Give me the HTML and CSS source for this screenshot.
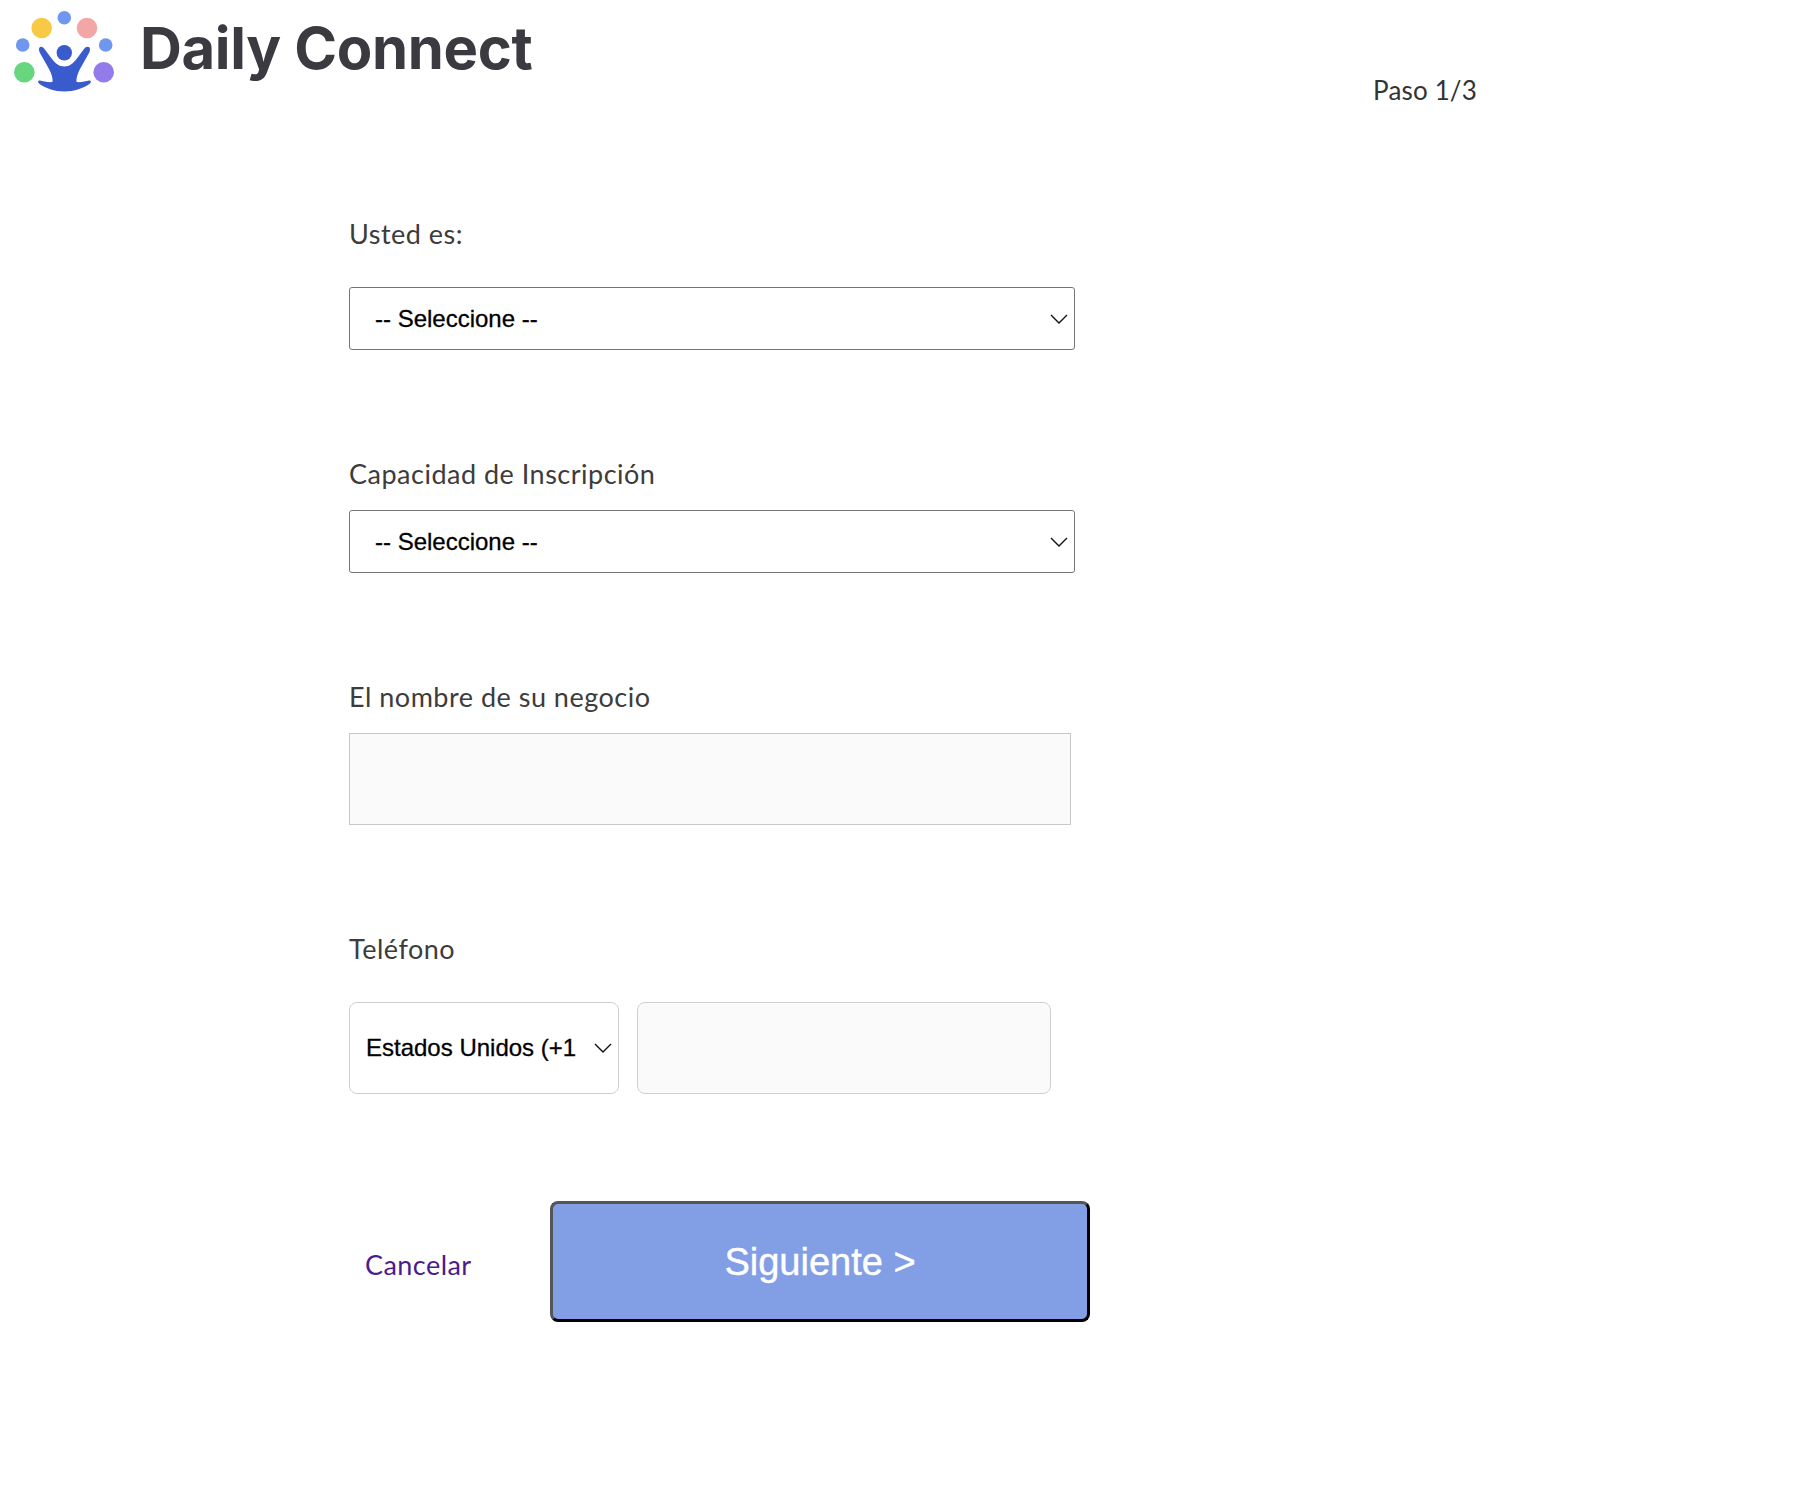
FILE: index.html
```html
<!DOCTYPE html>
<html lang="es">
<head>
<meta charset="utf-8">
<title>Daily Connect</title>
<link rel="stylesheet" href="styles.css">
</head>
<body>
<header class="header">
  <div class="brand">
    <svg class="logo" viewBox="0 0 130 100" width="130" height="100" aria-hidden="true">
      <circle cx="41.7" cy="28" r="10.3" fill="#f8c945"/>
      <circle cx="64.3" cy="17.7" r="6.8" fill="#7097f0"/>
      <circle cx="87" cy="28" r="10.3" fill="#f3a6a6"/>
      <circle cx="22.7" cy="45" r="6.8" fill="#7097f0"/>
      <circle cx="105.7" cy="45" r="6.8" fill="#7097f0"/>
      <circle cx="24.3" cy="72.3" r="10.3" fill="#66d67f"/>
      <circle cx="103.7" cy="72.3" r="10.3" fill="#937bec"/>
      <circle cx="64.3" cy="52.7" r="7.7" fill="#3a5bcc"/>
      <path fill="#3a5bcc" d="M39.5 47.5C41 46 43 47 44.5 49L52 59C55 63 59 66.5 64.3 66.5C69.5 66.5 73.5 63 76.5 59L84 49C85.5 47 88 46 89.5 47.5C90.5 49 90 51 89 53L80 69C77.5 74 76 78 76.5 82C80 82.5 86 81.5 89 80.5C91 80 91.5 82 90 83.5C84 88 74 91.5 64.3 91.5C54.5 91.5 45 88 39 83.5C37.5 82 38 80 40 80.5C43 81.5 49 82.5 52.5 82C53 78 51.5 74 49 69L40 53C39 51 38.5 49 39.5 47.5Z"/>
    </svg>
    <span class="brand-name">Daily Connect</span>
  </div>
  <div class="step">Paso 1/3</div>
</header>
<form class="form">
  <div class="field">
    <label class="label label-wide">Usted es:</label>
    <select class="select"><option>-- Seleccione --</option></select>
  </div>
  <div class="field">
    <label class="label">Capacidad de Inscripción</label>
    <select class="select"><option>-- Seleccione --</option></select>
  </div>
  <div class="field">
    <label class="label">El nombre de su negocio</label>
    <input class="input" type="text">
  </div>
  <div class="field-last">
    <label class="label label-wide">Teléfono</label>
    <div class="phone">
      <select class="phone-country"><option>Estados Unidos (+1</option></select>
      <input class="phone-number" type="text">
    </div>
  </div>
  <div class="actions">
    <a class="cancel" href="#">Cancelar</a>
    <button class="next" type="button">Siguiente &gt;</button>
  </div>
</form>
</body>
</html>
```
FILE: styles.css
```css
* { box-sizing: border-box; }
html, body { margin: 0; background: #fff; }
body { height: 1492px; font-family: "Lato", "Liberation Sans", sans-serif; color: #3c3c3c; overflow: hidden; }

.header { display: flex; align-items: flex-start; justify-content: space-between; height: 219px; padding-right: 319px; }
.brand { display: flex; align-items: flex-start; gap: 10px; }
.logo { display: block; flex: none; }
.brand-name { font-family: "Inter", "Liberation Sans", sans-serif; font-weight: 700; font-size: 58px; line-height: 72px; margin-top: 12px; color: #3a3a40; letter-spacing: -0.35px; }
.step { margin-top: 75px; font-size: 26px; line-height: 30px; letter-spacing: 0.15px; color: #333; }

.form { padding-left: 349px; }
.field { margin-bottom: 109px; }
.label { display: block; font-size: 27px; line-height: 30px; letter-spacing: 0.5px; margin-bottom: 21px; color: #3c3c3c; }
.label-wide { margin-bottom: 38px; }

.select, .phone-country {
  display: block; appearance: none; -webkit-appearance: none;
  font-family: "Liberation Sans", Arial, sans-serif; font-size: 24px; color: #000;
  -webkit-text-stroke: 0.3px #000;
  background-color: #fff;
  background-image: url("data:image/svg+xml,%3Csvg xmlns='http://www.w3.org/2000/svg' width='18' height='10' viewBox='0 0 18 10'%3E%3Cpath d='M1 1l8 8 8-8' fill='none' stroke='%23111' stroke-width='1.4'/%3E%3C/svg%3E");
  background-repeat: no-repeat;
}
.select {
  width: 726px; height: 63px; padding: 0 25px;
  border: 1px solid #767676; border-radius: 3px;
  background-position: right 6px center;
}
.input { display: block; width: 722px; height: 92px; border: 1px solid #c8c8c8; background: #fafafa; border-radius: 0; }

.phone { display: flex; gap: 18px; }
.phone-country {
  width: 270px; height: 92px; padding: 0 16px 2px;
  border: 1px solid #cfcfcf; border-radius: 8px;
  background-position: right 6px center;
}
.phone-number { width: 414px; height: 92px; border: 1px solid #cfcfcf; border-radius: 8px; background: #fafafa; }

.actions { display: flex; align-items: center; margin-top: 107px; }
.cancel { width: 201px; padding-left: 16px; padding-top: 7px; font-size: 27px; line-height: 30px; letter-spacing: 0.45px; color: #4a1d8c; text-decoration: none; }
.next {
  width: 540px; height: 121px; padding: 1px 0 0;
  font-family: "Liberation Sans", Arial, sans-serif; font-size: 38px; color: #fff;
  -webkit-text-stroke: 0.4px #fff;
  background: #829fe6; border: 3px solid; border-color: #555 #000 #000 #555; border-radius: 8px;
}
```
